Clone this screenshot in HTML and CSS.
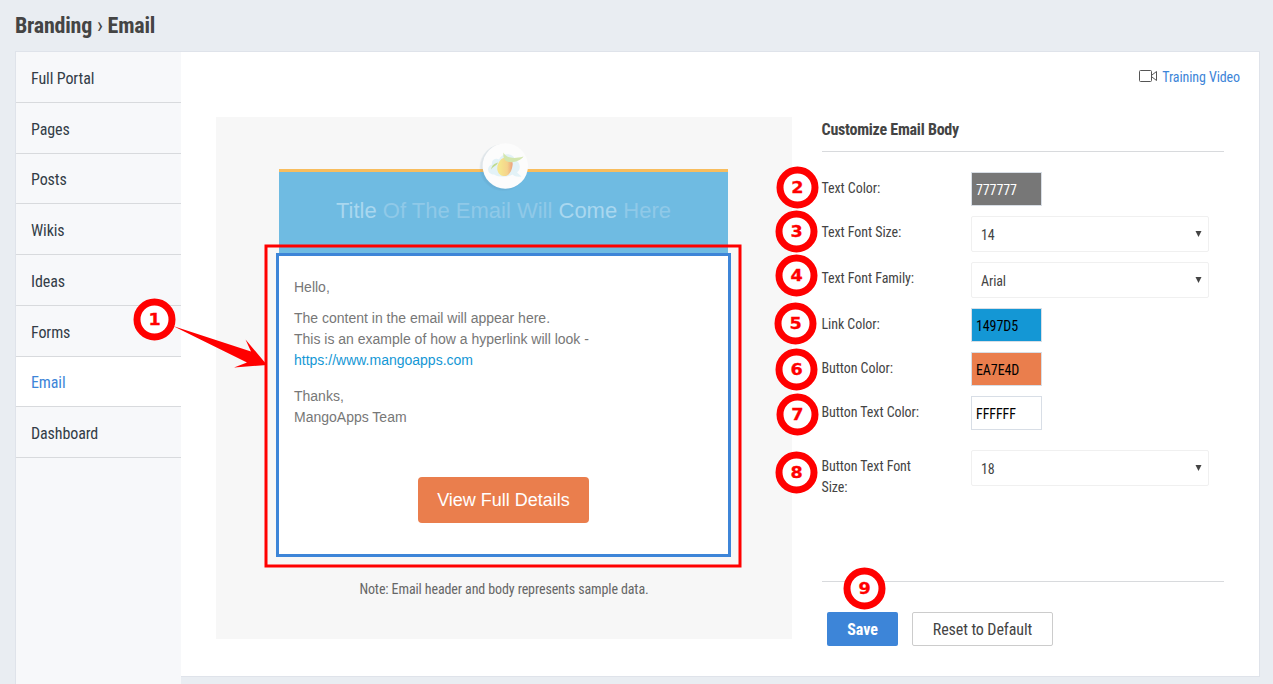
FILE: index.html
```html
<!DOCTYPE html>
<html lang="en">
<head>
<meta charset="utf-8">
<title>Branding › Email</title>
<link rel="stylesheet" href="styles.css">
</head>
<body>
<header class="page-head"><h1><b>Branding</b> <span class="sep">›</span> <b>Email</b></h1></header>
<div class="shell">
  <nav class="side">
    <a class="item">Full Portal</a>
    <a class="item">Pages</a>
    <a class="item">Posts</a>
    <a class="item">Wikis</a>
    <a class="item">Ideas</a>
    <a class="item">Forms</a>
    <a class="item active">Email</a>
    <a class="item">Dashboard</a>
  </nav>
  <main class="main">
    <a class="training">
      <svg width="20" height="14" viewBox="0 0 20 14" fill="none" stroke="#555" stroke-width="1"><rect x="1.500" y="1.500" width="12" height="11" rx="1"/><path d="M14 6l4.500-3.500v9L14 8"/></svg>
      <span>Training Video</span>
    </a>
    <div class="columns">
      <section class="preview">
        <div class="mail">
          <div class="banner">
            <svg class="logo" width="52" height="52" viewBox="0 0 52 52">
              <circle cx="26" cy="27.500" r="23.500" fill="#5a7f96" opacity=".07"/>
              <circle cx="26.500" cy="27" r="23" fill="#5a7f96" opacity=".08"/>
              <circle cx="28.300" cy="26" r="22.700" fill="#fcfcfc"/>
              <path d="M17 34.500c-7 0-8-8-2-10-1-5 4-7 7-5 3-7 14-7 16 0 6 3 6 10 2 13l4.500 4c-4 .5-7 0-9-2-5 3-14 3-18.500 0z" fill="#e3f2f7"/>
              <path d="M28 17.500c5-.5 8.500 3 7.500 8-.5 6-4.500 11.500-9 10.500-5.500-1-8-7-5-13 1.500-3 3.500-5 6.500-5.500z" fill="url(#mango)"/>
              <path d="M26.500 12.500c2 5 9 7 20 4-3 4.500-12 7.500-17.500 4.500-2.500-2-3-5-2.500-8.500z" fill="#d3e6ae"/>
              <path d="M14 29.500c1-4.500 3.500-6 7-7-1 3-5 4-7 7z" fill="#bfdb8d"/>
              <defs><linearGradient id="mango"><stop offset=".2" stop-color="#f5e58d"/><stop offset=".65" stop-color="#f5d38c"/><stop offset="1" stop-color="#eba17c"/></linearGradient></defs>
            </svg>
            <span class="mail-title"><i>Title</i> Of The Email Will <i>Come</i> Here</span>
          </div>
          <div class="mail-body">
            <p class="hello">Hello,</p>
            <p class="copy">The content in the email will appear here.<br>This is an example of how a hyperlink will look -<br><a class="link">https://www.mangoapps.com</a></p>
            <p class="bye">Thanks,<br>MangoApps Team</p>
            <a class="cta">View Full Details</a>
          </div>
        </div>
        <p class="note">Note: Email header and body represents sample data.</p>
      </section>
      <section class="form">
        <h2>Customize Email Body</h2>
        <div class="fields">
          <div class="row"><label>Text Color:</label><div class="swatch gray">777777</div></div>
          <div class="row"><label>Text Font Size:</label><div class="select">14<svg width="8" height="7"><path d="M.5 0h6l-3 6z" fill="#444"/></svg></div></div>
          <div class="row"><label>Text Font Family:</label><div class="select">Arial<svg width="8" height="7"><path d="M.5 0h6l-3 6z" fill="#444"/></svg></div></div>
          <div class="row"><label>Link Color:</label><div class="swatch blue">1497D5</div></div>
          <div class="row"><label>Button Color:</label><div class="swatch orange">EA7E4D</div></div>
          <div class="row"><label>Button Text Color:</label><div class="swatch">FFFFFF</div></div>
          <div class="row last"><label>Button Text Font Size:</label><div class="select">18<svg width="8" height="7"><path d="M.5 0h6l-3 6z" fill="#444"/></svg></div></div>
        </div>
        <div class="actions"><button class="save">Save</button><button class="reset">Reset to Default</button></div>
      </section>
    </div>
  </main>
</div>
<svg class="callouts" width="1273" height="684" viewBox="0 0 1273 684">
  <rect x="266" y="246" width="474" height="320" fill="none" stroke="#f00" stroke-width="3"/>
  <path d="M173 326L251 351.500L245.500 339.500L267 365L234 367.500L247 362.500Z" fill="#f00"/>
  <g fill="#fff" stroke="#f00" stroke-width="7">
    <circle cx="154.500" cy="319.500" r="17.500"/><circle cx="797.500" cy="187.500" r="17.500"/><circle cx="796.500" cy="231.500" r="17.500"/><circle cx="796.500" cy="275.500" r="17.500"/><circle cx="795.500" cy="323.500" r="17.500"/><circle cx="796.500" cy="369.500" r="17.500"/><circle cx="797.500" cy="414.500" r="17.500"/><circle cx="796.500" cy="472.500" r="17.500"/><circle cx="864.500" cy="588.500" r="17.500"/>
  </g>
  <g class="nums">
    <text x="154.500" y="325.500">1</text><text x="797.500" y="193.500">2</text><text x="796.500" y="237.500">3</text><text x="796.500" y="281.500">4</text><text x="795.500" y="329.500">5</text><text x="796.500" y="375.500">6</text><text x="797.500" y="420.500">7</text><text x="796.500" y="478.500">8</text><text x="864.500" y="594.500">9</text>
  </g>
</svg>
</body>
</html>
```
FILE: styles.css
```css
* { box-sizing: border-box; }
body { margin: 0; height: 684px; overflow: hidden; background: #e9edf2; color: #444; font-family: "Roboto Condensed", Roboto, "Liberation Sans", sans-serif; font-stretch: 75%; font-size: 14px; letter-spacing: -.1px; }
h1, h2, p { margin: 0; }
.page-head { height: 51px; padding: 11px 15px 0; }
h1 { font-size: 22px; line-height: 30px; font-weight: 400; letter-spacing: -.22px; white-space: nowrap; }
.shell { display: flex; align-items: flex-start; width: 1245px; margin-left: 15px; height: 633px; border-top: 1px solid #dfe3ea; border-left: 1px solid #dfe3ea; }
.side { width: 165px; height: 632px; background: #f7f8fa; }
.item { display: flex; align-items: center; height: 50.75px; padding: 3px 0 0 15px; border-bottom: 1px solid #d8dadd; font-size: 16px; color: #333d47; }
.item.active { background: #fff; color: #3d85d8; }
.main { width: 1079px; height: 625px; background: #fff; border-right: 1px solid #dfe3ea; border-bottom: 1px solid #dfe3ea; padding: 15px 19px 0 35px; }
.training { display: flex; justify-content: flex-end; align-items: center; gap: 4px; height: 20px; font-size: 14px; color: #3d85d8; }
.training svg { margin-bottom: 2px; }
.columns { display: flex; gap: 30px; margin-top: 30px; }
.preview { width: 576px; height: 522px; background: #f7f7f7; padding-top: 52px; }
.mail { width: 455px; margin: 0 auto 0 60px; font-family: "Liberation Sans", Arial, sans-serif; letter-spacing: 0; }
.banner { position: relative; height: 84px; margin: 0 3px; background: #6fbbe2; border-top: 3px solid #f8bd5e; padding-top: 26px; text-align: center; }
.logo { position: absolute; left: 198px; top: -32px; }
.mail-title { font-size: 22px; line-height: 26px; color: #8fc9e8; }
.mail-title i { font-style: normal; color: #a9d7ef; }
.mail-body { height: 304px; border: 3px solid #3d85d8; background: #fff; padding: 21px 15px 0; font-size: 14px; line-height: 21px; color: #777; display: flex; flex-direction: column; }
.copy { margin-top: 10px; }
.link { color: #1497d5; }
.bye { margin-top: 15px; }
.cta { align-self: center; margin-top: 49px; width: 171px; height: 46px; border-radius: 4px; background: #ea7e4d; color: #fff; font-size: 18px; line-height: 46px; text-align: center; }
.note { margin-top: 22px; text-align: center; line-height: 21px; font-size: 14px; color: #666; letter-spacing: -.11px; }
.form { width: 402px; }
h2 { height: 35px; border-bottom: 1px solid #d8dadd; font-size: 16px; line-height: 25px; font-weight: 700; letter-spacing: -.24px; text-indent: -.5px; }
.fields { height: 429px; padding-top: 20px; display: flex; flex-direction: column; gap: 10px; }
.row { display: grid; grid-template-columns: 110px 238px; column-gap: 39px; align-items: start; line-height: 21px; }
.row.last { margin-top: 10px; }
label { padding-top: 6px; margin-left: -.5px; letter-spacing: -.07px; }
.swatch { width: 71px; height: 34px; border: 1px solid #d8dee6; padding: 1px 0 0 4px; line-height: 32px; color: #000; background: #fff; }
.gray { background: #777; color: #fff; }
.blue { background: #1497d5; }
.orange { background: #ea7e4d; }
.select { display: flex; align-items: center; justify-content: space-between; height: 36px; border: 1px solid #f0f0f0; border-radius: 2px; padding: 2px 5px 0 9px; background: #fff; }
.select svg { margin-bottom: 2px; }
.actions { border-top: 1px solid #d8dadd; display: flex; gap: 14px; padding: 30px 0 0 5px; }
button { height: 34px; padding: 0; border-radius: 2px; font: inherit; font-size: 16px; letter-spacing: -.1px; }
.save { width: 71px; border: 0; background: #3d85d8; color: #fff; font-weight: 700; }
.reset { width: 141px; border: 1px solid #ccc; background: #fff; color: #444; }
.callouts { position: absolute; left: 0; top: 0; pointer-events: none; }
.nums { font: bold 16px "DejaVu Sans", sans-serif; font-stretch: normal; letter-spacing: 0; fill: #f00; stroke: #f00; stroke-width: .3px; text-anchor: middle; }
.nums text { transform-box: fill-box; transform-origin: center; transform: scaleX(1.1); }
```
